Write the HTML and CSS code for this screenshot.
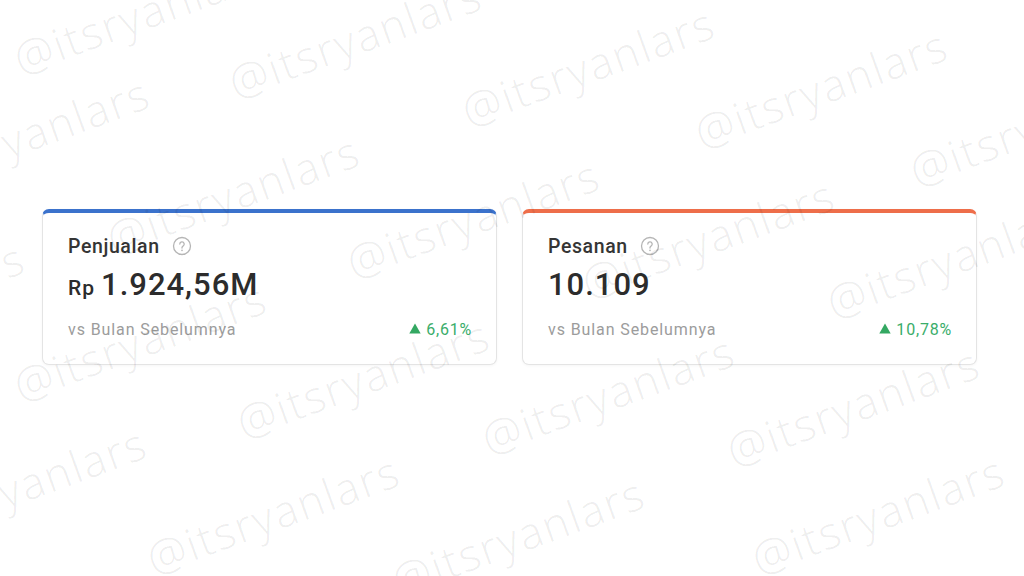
FILE: index.html
```html
<!DOCTYPE html>
<html lang="id">
<head>
<meta charset="utf-8">
<title>Statistik</title>
<link rel="stylesheet" href="styles.css">
</head>
<body>
<main class="page">
  <section class="cards">
    <article class="card card--blue">
      <div class="card-title">Penjualan
        <svg class="help" viewBox="0 0 20 20" width="20" height="20" aria-hidden="true">
          <circle cx="10" cy="10" r="8.5" fill="none" stroke="#b5b5b5" stroke-width="1.3"/>
          <path d="M7.8 8.1a2.2 2.2 0 1 1 3.2 2c-.7.4-1 .8-1 1.5v.5" fill="none" stroke="#b5b5b5" stroke-width="1.3" stroke-linecap="round"/>
          <circle cx="10" cy="14.4" r=".8" fill="#b5b5b5"/>
        </svg>
      </div>
      <div class="card-value"><span class="currency">Rp</span>1.924,56M</div>
      <div class="card-foot">
        <span class="compare">vs Bulan Sebelumnya</span>
        <span class="delta"><svg class="tri" viewBox="0 0 12 11" width="12" height="11" aria-hidden="true"><path d="M6 0.4 L11.7 10.6 H0.3 Z" fill="#34a862"/></svg>6,61%</span>
      </div>
    </article>
    <article class="card card--orange">
      <div class="card-title">Pesanan
        <svg class="help" viewBox="0 0 20 20" width="20" height="20" aria-hidden="true">
          <circle cx="10" cy="10" r="8.5" fill="none" stroke="#b5b5b5" stroke-width="1.3"/>
          <path d="M7.8 8.1a2.2 2.2 0 1 1 3.2 2c-.7.4-1 .8-1 1.5v.5" fill="none" stroke="#b5b5b5" stroke-width="1.3" stroke-linecap="round"/>
          <circle cx="10" cy="14.4" r=".8" fill="#b5b5b5"/>
        </svg>
      </div>
      <div class="card-value">10.109</div>
      <div class="card-foot">
        <span class="compare">vs Bulan Sebelumnya</span>
        <span class="delta"><svg class="tri" viewBox="0 0 12 11" width="12" height="11" aria-hidden="true"><path d="M6 0.4 L11.7 10.6 H0.3 Z" fill="#34a862"/></svg>10,78%</span>
      </div>
    </article>
  </section>
</main>
<div class="watermarks" aria-hidden="true">
  <span class="wm" style="left:22px;top:38px">@itsryanlars</span>
  <span class="wm" style="left:237px;top:62px">@itsryanlars</span>
  <span class="wm" style="left:470px;top:90px">@itsryanlars</span>
  <span class="wm" style="left:703px;top:112px">@itsryanlars</span>
  <span class="wm" style="left:918px;top:150px">@itsryanlars</span>
  <span class="wm" style="left:-95px;top:160px">@itsryanlars</span>
  <span class="wm" style="left:115px;top:218px">@itsryanlars</span>
  <span class="wm" style="left:355px;top:242px">@itsryanlars</span>
  <span class="wm" style="left:590px;top:262px">@itsryanlars</span>
  <span class="wm" style="left:835px;top:282px">@itsryanlars</span>
  <span class="wm" style="left:-220px;top:325px">@itsryanlars</span>
  <span class="wm" style="left:22px;top:365px">@itsryanlars</span>
  <span class="wm" style="left:245px;top:402px">@itsryanlars</span>
  <span class="wm" style="left:490px;top:418px">@itsryanlars</span>
  <span class="wm" style="left:735px;top:430px">@itsryanlars</span>
  <span class="wm" style="left:-98px;top:510px">@itsryanlars</span>
  <span class="wm" style="left:155px;top:538px">@itsryanlars</span>
  <span class="wm" style="left:400px;top:560px">@itsryanlars</span>
  <span class="wm" style="left:760px;top:538px">@itsryanlars</span>
</div>
</body>
</html>
```
FILE: styles.css
```css
html, body {
  margin: 0;
  padding: 0;
  background: #ffffff;
}

body {
  width: 1024px;
  height: 576px;
  overflow: hidden;
  position: relative;
  font-family: Roboto, "Noto Sans", "Liberation Sans", sans-serif;
  color: #333333;
}

.page {
  padding: 209px 0 0 42px;
}

.cards {
  display: flex;
  gap: 25px;
}

.card {
  box-sizing: border-box;
  width: 455px;
  height: 156px;
  background: #ffffff;
  border: 1px solid #e4e4e4;
  border-top: 4px solid #3b72cc;
  border-radius: 7px;
  padding: 21px 24px 0 25px;
  box-shadow: 0 1px 3px rgba(0, 0, 0, 0.04);
}

.card--orange {
  border-top-color: #ee6e4a;
}

.card-title {
  display: flex;
  align-items: center;
  gap: 12px;
  height: 24px;
  font-size: 19.5px;
  font-weight: 500;
  letter-spacing: 0.6px;
  color: #353535;
}

.help {
  display: block;
  flex: none;
}

.card-value {
  margin-top: 7px;
  height: 40px;
  line-height: 40px;
  font-size: 31px;
  font-weight: 500;
  color: #2c2c2c;
  letter-spacing: 1px;
}

.currency {
  font-size: 21px;
  margin-right: 6px;
  letter-spacing: 1px;
}

.card-foot {
  margin-top: 14px;
  display: flex;
  justify-content: space-between;
  align-items: center;
  height: 20px;
  font-size: 16px;
  letter-spacing: 0.9px;
}

.compare {
  color: #9c9c9c;
}

.delta {
  display: flex;
  align-items: center;
  gap: 5px;
  color: #3aad6a;
  letter-spacing: 0.8px;
}

.tri {
  display: block;
  margin-top: -1px;
}

.watermarks {
  position: absolute;
  inset: 0;
  overflow: hidden;
  pointer-events: none;
}

.wm {
  position: absolute;
  font-family: "Open Sans", "Noto Sans", sans-serif;
  font-size: 44px;
  font-weight: 300;
  line-height: 40px;
  letter-spacing: 2px;
  white-space: nowrap;
  color: rgba(0, 0, 0, 0.075);
  transform-origin: 0 100%;
  transform: rotate(-20deg);
}
```
